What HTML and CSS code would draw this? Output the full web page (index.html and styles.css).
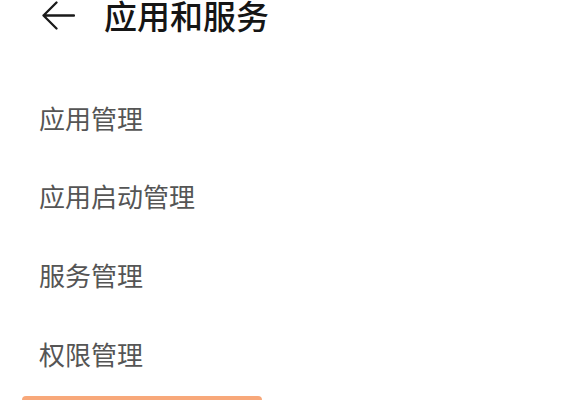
FILE: index.html
```html
<!DOCTYPE html>
<html lang="zh">
<head>
<meta charset="utf-8">
<link rel="stylesheet" href="styles.css">
</head>
<body>
<div class="page">
  <header class="header">
    <svg class="back" width="34" height="30" viewBox="0 0 34 30">
      <path d="M33 14.5 H2.5 M15.5 1.5 L2.5 14.5 L15.5 27.5" fill="none" stroke="#1a1a1a" stroke-width="2.3" stroke-linecap="round" stroke-linejoin="round"/>
    </svg>
    <h1 class="title">应用和服务</h1>
  </header>
  <ul class="list">
    <li class="item">应用管理</li>
    <li class="item">应用启动管理</li>
    <li class="item">服务管理</li>
    <li class="item">权限管理</li>
  </ul>
  <div class="bar"></div>
</div>
</body>
</html>
```

FILE: styles.css
```css
html, body {
  margin: 0;
  padding: 0;
  background: #ffffff;
}
body {
  font-family: "Noto Sans CJK SC", "Noto Sans", sans-serif;
  width: 584px;
  height: 400px;
  overflow: hidden;
}
.page {
  display: flex;
  flex-direction: column;
  height: 400px;
}
.header {
  display: flex;
  align-items: center;
  height: 31px;
  padding-left: 41px;
}
.back {
  display: block;
  width: 34px;
  height: 30px;
}
.title {
  margin: 0 0 0 29px;
  font-size: 33px;
  line-height: 33px;
  font-weight: 500;
  color: #151515;
}
.list {
  list-style: none;
  margin: 47px 0 0 0;
  padding: 0 0 0 39px;
}
.item {
  height: 78.6px;
  display: flex;
  align-items: center;
  font-size: 26px;
  color: #555555;
}
.bar {
  margin: 4px 0 0 22px;
  width: 240px;
  height: 8px;
  border-radius: 6px 6px 0 0;
  background: #f8a87a;
}
```
